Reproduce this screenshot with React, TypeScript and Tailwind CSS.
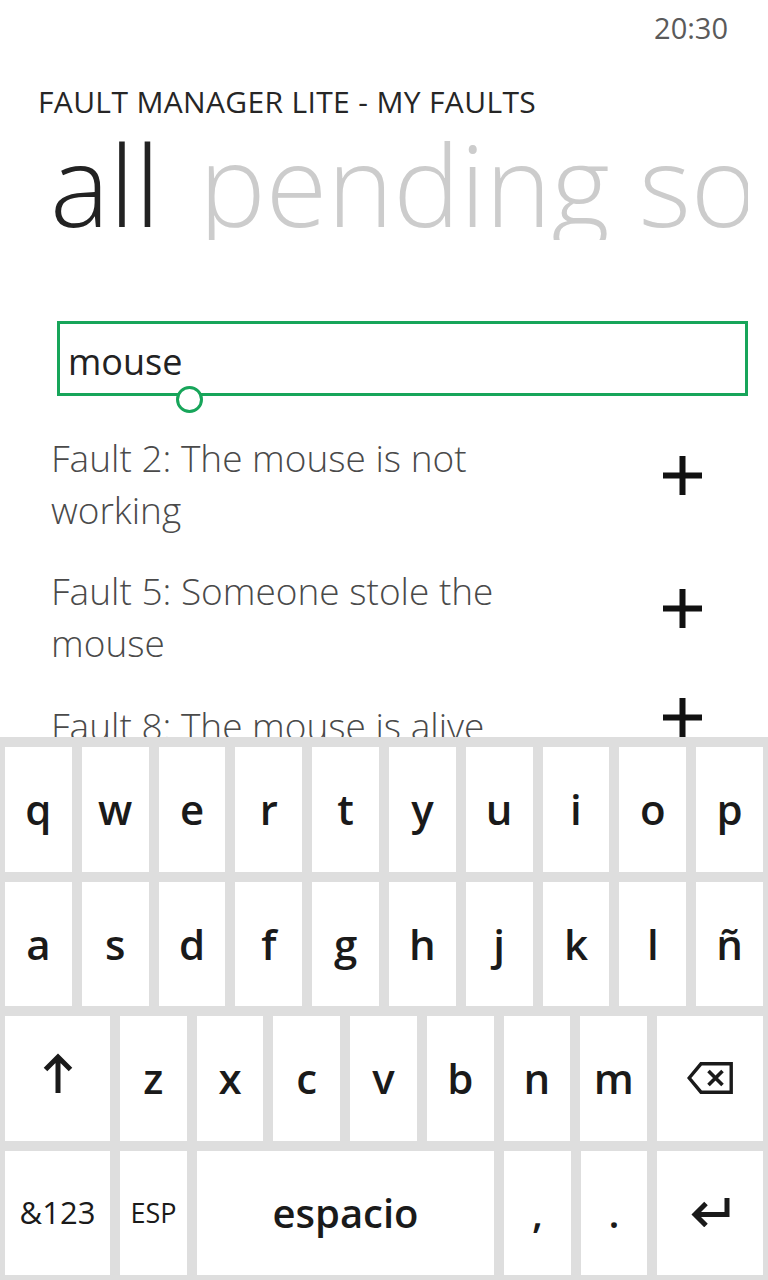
import React from "react";

const GREEN = "#17a55a";

// 搜索结果
const faults = [
  "Fault 2: The mouse is not working",
  "Fault 5: Someone stole the mouse",
  "Fault 8: The mouse is alive",
];

function PlusIcon() {
  return (
    <svg width="39" height="39" viewBox="0 0 39 39" className="block">
      <path d="M19.5 0 V39 M0 19.5 H39" stroke="#111" strokeWidth="6" fill="none" />
    </svg>
  );
}

function ShiftIcon() {
  return (
    <svg width="30" height="40" viewBox="0 0 30 40" className="block -mt-[10px]">
      <path d="M15 40 V4 M2.5 16.5 L15 4 L27.5 16.5" stroke="#1a1a1a" strokeWidth="5" fill="none" />
    </svg>
  );
}

function BackspaceIcon() {
  return (
    <svg width="46" height="32" viewBox="0 0 46 32" className="block">
      <path d="M14 1.8 H44.2 V30.2 H14 L2.2 16 Z" stroke="#1a1a1a" strokeWidth="3.4" fill="none" strokeLinejoin="miter" />
      <path d="M21.5 9 L35.5 23 M35.5 9 L21.5 23" stroke="#1a1a1a" strokeWidth="3.6" fill="none" />
    </svg>
  );
}

function EnterIcon() {
  return (
    <svg width="39" height="29" viewBox="0 0 39 29" className="block">
      <path d="M36 0 V16.5 H5" stroke="#1a1a1a" strokeWidth="5" fill="none" />
      <path d="M15 5.5 L4 16.5 L15 27.5" stroke="#1a1a1a" strokeWidth="5" fill="none" />
    </svg>
  );
}

function Key({ children, className = "" }: { children: React.ReactNode; className?: string }) {
  return (
    <div className={"bg-white flex items-center justify-center text-[#1a1a1a] " + className}>
      {children}
    </div>
  );
}

function LetterRow({ letters }: { letters: string[] }) {
  return (
    <div className="flex-1 flex gap-[10px]">
      {letters.map((l) => (
        <Key key={l} className="flex-1 text-[42px] font-semibold leading-none">
          {l}
        </Key>
      ))}
    </div>
  );
}

export default function App() {
  return (
    <div
      className="relative w-[768px] h-[1280px] overflow-hidden bg-white"
      style={{ fontFamily: '"Open Sans", "Noto Sans", sans-serif' }}
    >
      {/* 状态栏 */}
      <div className="h-[87px] pt-[13px] pr-[40px] flex justify-end">
        <span className="text-[29px] leading-[29px] text-[#5a5a5a]">20:30</span>
      </div>

      {/* 标题 */}
      <div className="pl-[38px] text-[30px] leading-[29px] tracking-[0.35px] text-[#262626]">
        FAULT MANAGER LITE - MY FAULTS
      </div>

      {/* pivot 标签 */}
      <div className="mt-[12px] mr-[20px] pl-[50px] overflow-hidden whitespace-nowrap text-[112px] leading-[112px] font-light">
        <span className="text-[#222]">all</span>
        <span className="ml-[39px] text-[#cccccc]">pending so</span>
      </div>

      {/* 搜索框 */}
      <div className="relative mt-[81px] ml-[57px] w-[691px] h-[75px] border-[3px] border-[#17a55a] flex items-center pt-[6px] pl-[8px]">
        <span className="text-[36px] leading-none text-[#222]">mouse</span>
        <div
          className="absolute left-[116px] bottom-[-20px] w-[27px] h-[27px] rounded-full bg-white border-[3px]"
          style={{ borderColor: GREEN }}
        />
      </div>

      {/* 列表 */}
      <div className="mt-[36px] flex flex-col gap-[29px]">
        {faults.map((f) => (
          <div key={f} className="flex items-center">
            <div className="pl-[51px] w-[531px] text-[37px] leading-[52px] font-light text-[#4a4a4a]">
              {f}
            </div>
            <div className="ml-auto mr-[66px] pb-[17px]">
              <PlusIcon />
            </div>
          </div>
        ))}
      </div>

      {/* 键盘 */}
      <div className="absolute left-0 right-0 bottom-0 h-[543px] bg-[#dedede] pt-[10px] px-[5px] pb-[5px] flex flex-col gap-[10px]">
        <LetterRow letters={["q", "w", "e", "r", "t", "y", "u", "i", "o", "p"]} />
        <LetterRow letters={["a", "s", "d", "f", "g", "h", "j", "k", "l", "ñ"]} />
        <div className="flex-1 flex gap-[10px]">
          <Key className="w-[105px]">
            <ShiftIcon />
          </Key>
          {["z", "x", "c", "v", "b", "n", "m"].map((l) => (
            <Key key={l} className="flex-1 text-[42px] font-semibold leading-none">
              {l}
            </Key>
          ))}
          <Key className="w-[106px]">
            <BackspaceIcon />
          </Key>
        </div>
        <div className="flex-1 flex gap-[10px]">
          <Key className="w-[105px] text-[31px] leading-none">&amp;123</Key>
          <Key className="w-[67px] text-[27px] font-medium leading-none">ESP</Key>
          <Key className="flex-1 text-[40px] font-semibold leading-none">espacio</Key>
          <Key className="w-[67px] text-[40px] font-semibold leading-none">,</Key>
          <Key className="w-[66px] text-[40px] font-semibold leading-none">.</Key>
          <Key className="w-[106px]">
            <EnterIcon />
          </Key>
        </div>
      </div>
    </div>
  );
}
